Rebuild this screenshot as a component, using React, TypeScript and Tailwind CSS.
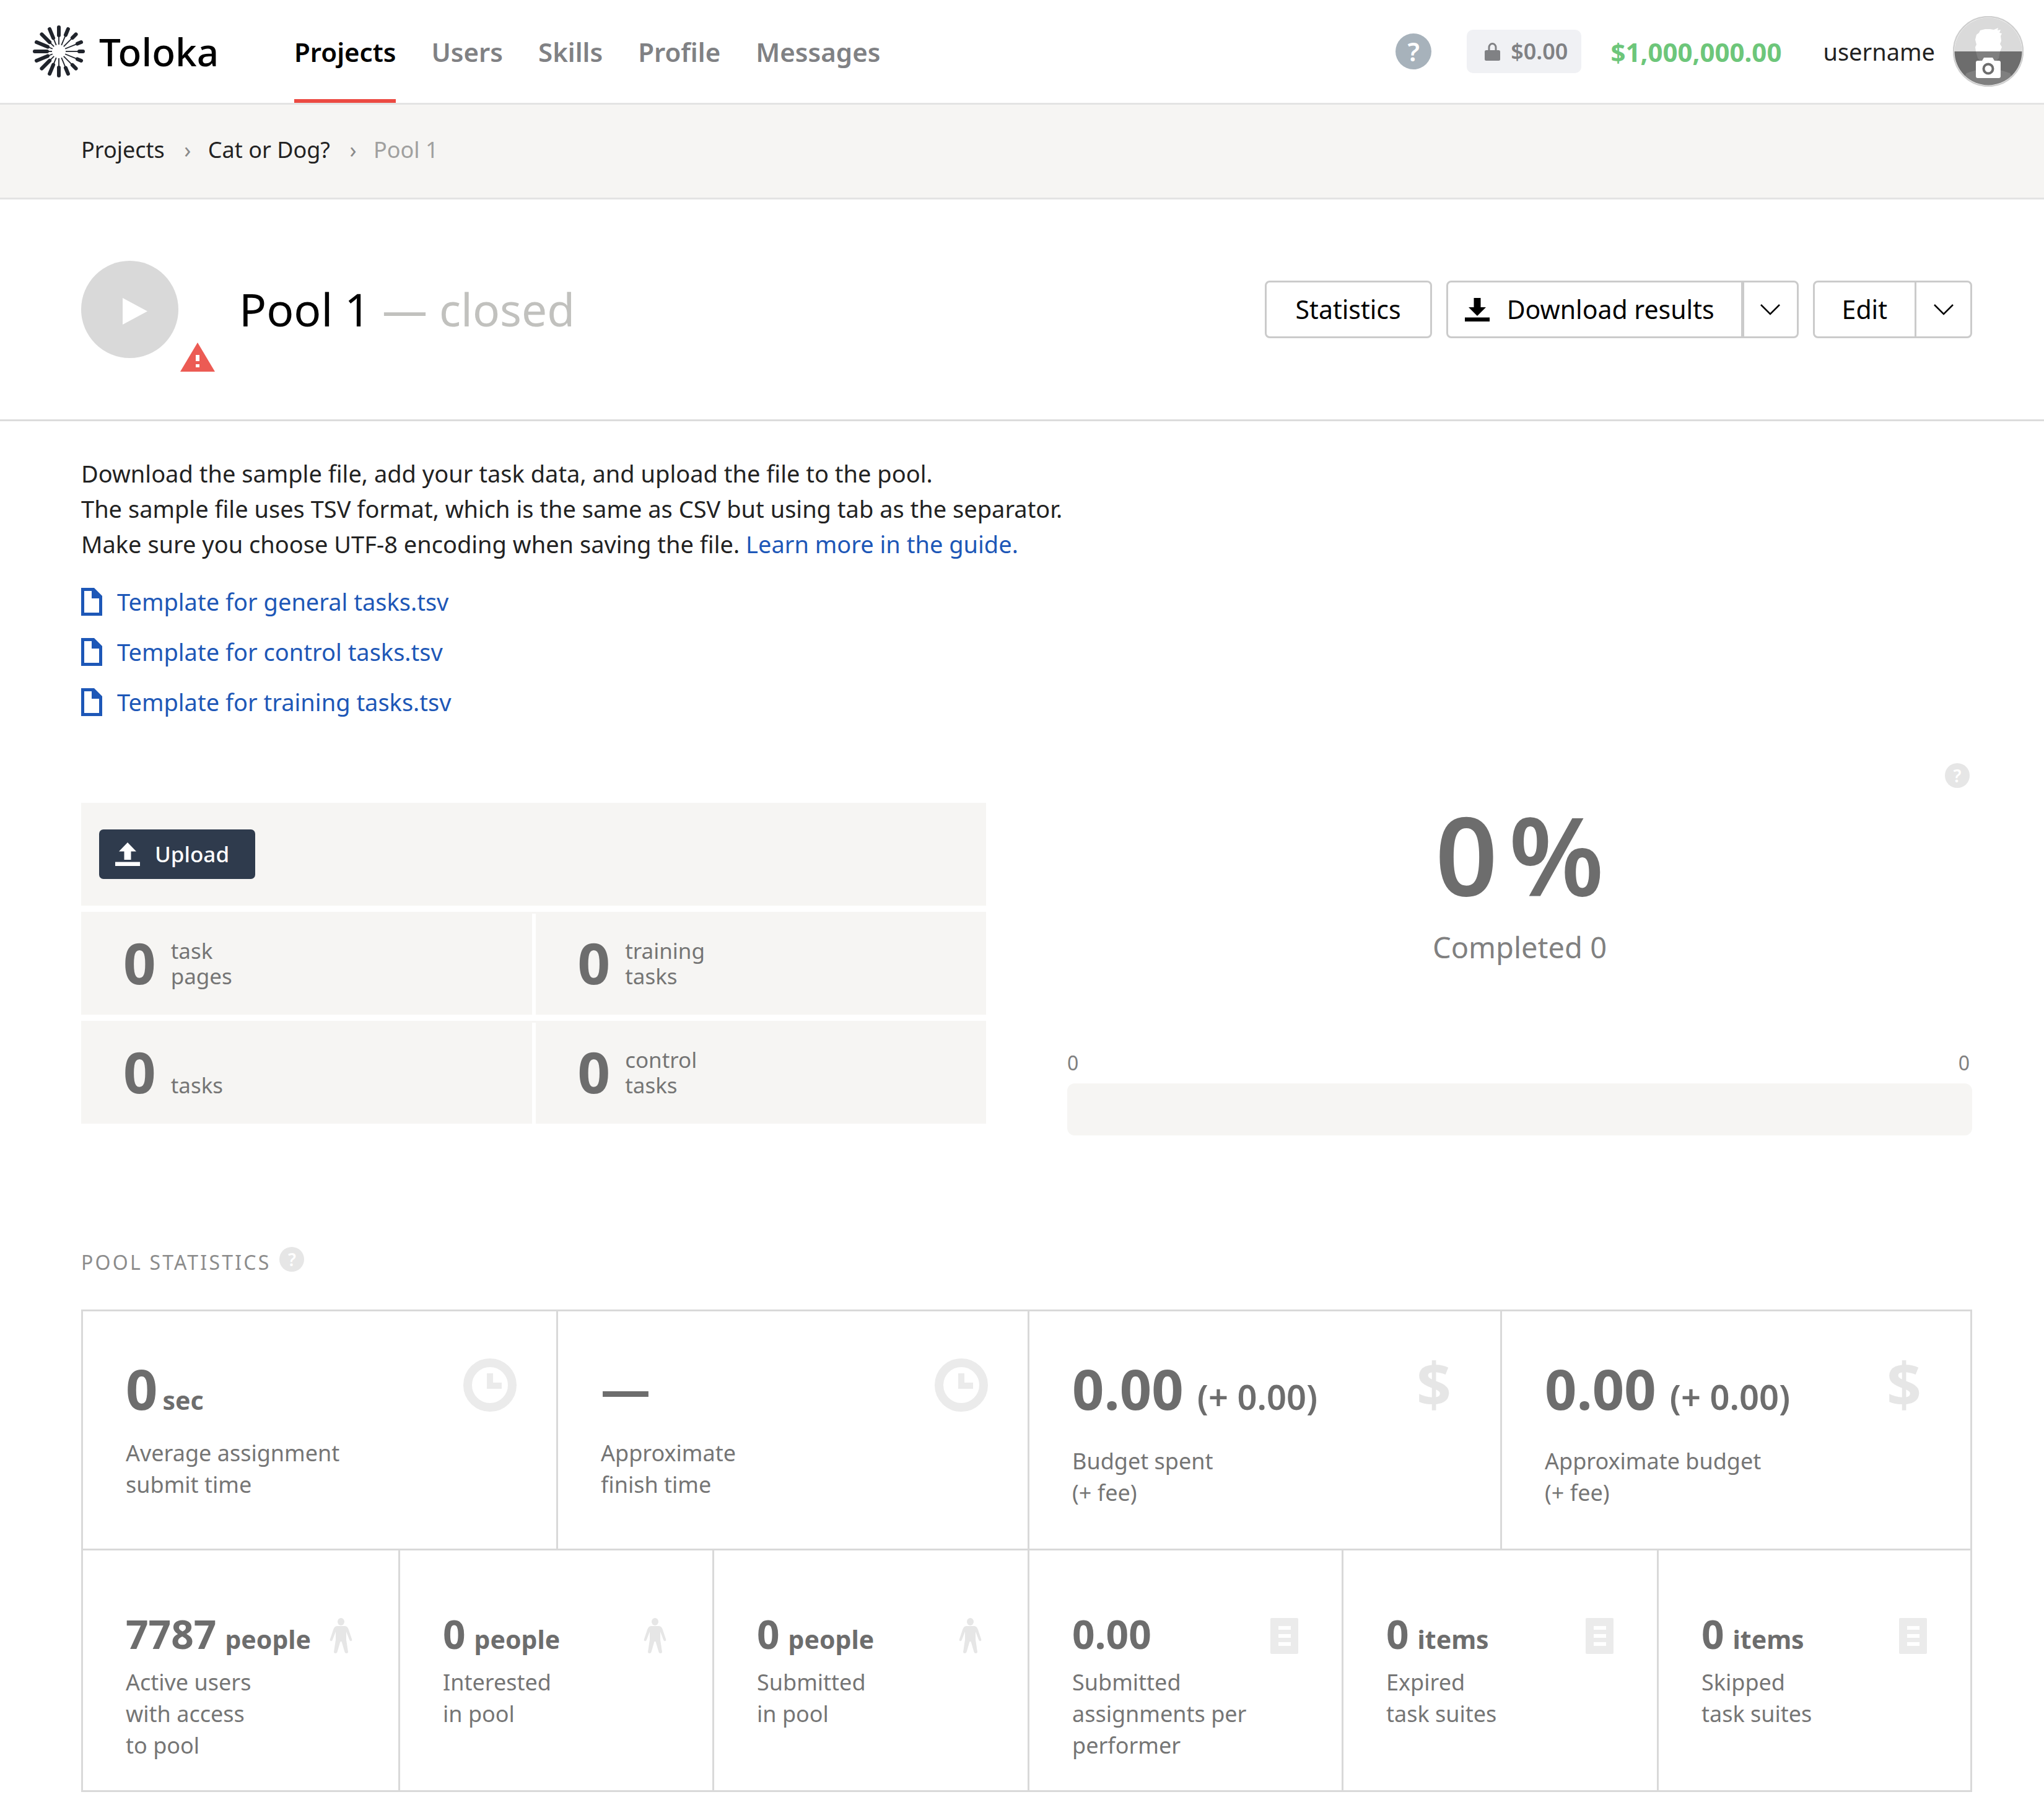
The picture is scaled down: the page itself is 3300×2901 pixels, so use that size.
import type { ReactNode } from 'react';

const RAYS = Array.from({ length: 16 }, (_, i) => {
  const angle = (i * Math.PI) / 8;
  const thickStart = 26 + 7 * Math.cos(angle);
  const point = (r: number) => [43 + r * Math.cos(angle), 43 + r * Math.sin(angle)];
  return { inner: point(11), mid: point(thickStart), outer: point(39) };
});

function LogoMark() {
  return (
    <svg className="size-[86px]" viewBox="0 0 86 86" stroke="#20242c" aria-hidden="true">
      {RAYS.map(({ inner, mid, outer }, i) => (
        <g key={i}>
          <line x1={inner[0]} y1={inner[1]} x2={mid[0]} y2={mid[1]} strokeWidth="1.800" />
          <line x1={mid[0]} y1={mid[1]} x2={outer[0]} y2={outer[1]} strokeWidth="6" strokeLinecap="round" />
        </g>
      ))}
    </svg>
  );
}

function LockIcon() {
  return (
    <svg className="h-[30px] w-[25px]" viewBox="0 0 25 30" aria-hidden="true">
      <path d="M7 14V8.500a5.500 6 0 0 1 11 0V14" fill="none" stroke="#808184" strokeWidth="3" />
      <rect y="13" width="25" height="17" rx="2.500" fill="#808184" />
    </svg>
  );
}

function Avatar() {
  return (
    <svg className="size-[114px]" viewBox="0 0 114 114" aria-hidden="true">
      <defs>
        <clipPath id="avatar-clip">
          <circle cx="57" cy="57" r="54.500" />
        </clipPath>
      </defs>
      <circle cx="57" cy="57" r="56" fill="#fff" stroke="#cfcfcf" strokeWidth="2.500" />
      <g clipPath="url(#avatar-clip)">
        <rect width="114" height="114" fill="#dadada" />
        <path
          d="M38 30 42 27 44 23 52 21 60 21 66 22 73 19 72 23 77 22 75 27 79 28 77 32 78 40 76 45 79 50 76 57 74 68 66 76V84L92 92 104 114H10L22 92 48 84V76L40 68 37 57 36 50 38 46 36 38Z"
          fill="#fff"
        />
        <rect y="57" width="114" height="57" fill="#000" fillOpacity=".5" />
      </g>
      <path d="M40 72h7l3-5h14l3 5h7q3 0 3 3v22q0 3-3 3H40q-3 0-3-3V75q0-3 3-3Z" fill="#fff" />
      <circle cx="57" cy="85" r="7.500" fill="none" stroke="#6d6d6d" strokeWidth="4" />
    </svg>
  );
}

function WarningIcon() {
  return (
    <svg className="h-[47px] w-[56px]" viewBox="0 0 56 47" role="img" aria-label="Warning">
      <path d="M28 0 56 47H0Z" fill="#ec5b54" />
      <path d="M25 20h6v10h-6zM25 35h6v5h-6z" fill="#fff" />
    </svg>
  );
}

function DownloadIcon() {
  return (
    <svg className="h-[38px] w-[40px]" viewBox="0 0 40 38" aria-hidden="true">
      <path d="M14.500 0h11v15H34L20 29 6 15h8.500zM0 31.500h40V38H0z" />
    </svg>
  );
}

function UploadIcon() {
  return (
    <svg className="h-[38px] w-[40px]" viewBox="0 0 40 38" fill="currentColor" aria-hidden="true">
      <path d="M20 0 34 14.500h-8.500V28h-11V14.500H6zM0 31.500h40V38H0z" />
    </svg>
  );
}

function ChevronIcon() {
  return (
    <svg className="h-[18px] w-[32px]" viewBox="0 0 32 18" fill="none" stroke="#000" strokeWidth="2.500" aria-hidden="true">
      <path d="M1 1 16 16 31 1" />
    </svg>
  );
}

function FileIcon() {
  return (
    <svg className="h-[45px] w-[34px]" viewBox="0 0 34 45" fill="#1d57b7" fillRule="evenodd" aria-hidden="true">
      <path d="M0 0H21L34 13V45H0ZM5 5V40H29V17H17V5Z" />
    </svg>
  );
}

function ClockIcon() {
  return (
    <svg className="size-[86px]" viewBox="0 0 86 86" aria-hidden="true">
      <circle cx="43" cy="43" r="36" fill="none" stroke="#ebebeb" strokeWidth="14" />
      <path d="M38 24h10v15h14v10H38z" fill="#ebebeb" />
    </svg>
  );
}

function DollarIcon() {
  return (
    <span className="flex h-[86px] w-[86px] items-center justify-center pb-[6px] text-[98px] leading-none font-bold text-[#e6e6e6]" aria-hidden="true">
      $
    </span>
  );
}

function PersonIcon() {
  return (
    <svg className="h-[58px] w-[45px]" viewBox="0 0 45 58" fill="#e6e6e6" aria-hidden="true">
      <ellipse cx="22.500" cy="6" rx="5.500" ry="6" />
      <path d="M16 13h13q4 0 6 6l5 15q1 3-1 3-2 1-3-2l-5-13v13l3 20q0 2-2.500 2T28.500 55L23.500 38h-2L16.500 55q-.5 2-3 2T11 55l3-20V22L9 35q-1 3-3 2-2 0-1-3l5-15q2-6 6-6Z" />
    </svg>
  );
}

function SheetIcon() {
  return (
    <svg className="h-[58px] w-[45px]" viewBox="0 0 45 58" aria-hidden="true">
      <rect width="45" height="58" rx="2" fill="#ebebeb" />
      <path d="M13 13h20v6H13zM13 26h20v6H13zM13 39h20v6H13z" fill="#fff" />
    </svg>
  );
}

function HintButton({ className = '' }: { className?: string }) {
  return (
    <button
      type="button"
      aria-label="Help"
      className={`flex size-10 items-center justify-center rounded-full bg-[#e6e6e6] text-[28px] leading-none font-semibold text-white ${className}`}
    >
      ?
    </button>
  );
}

const NAV = ['Projects', 'Users', 'Skills', 'Profile', 'Messages'];
const TEMPLATES = ['Template for general tasks.tsv', 'Template for control tasks.tsv', 'Template for training tasks.tsv'];

function Header() {
  return (
    <header className="flex h-[169px] items-center border-b-[3px] border-[#e3e3e3] pr-[33px] pl-[52px]">
      <a href="#" className="flex w-[423px] shrink-0 items-center gap-[22px] text-[62px] leading-none font-medium text-black">
        <LogoMark />
        Toloka
      </a>
      <nav className="flex h-full gap-[57px] text-[42px] font-semibold text-[#808184]">
        {NAV.map((item, i) => (
          <a key={item} href="#" className={i === 0 ? 'relative flex items-center text-black' : 'flex items-center'}>
            {item}
            {i === 0 && <span className="absolute inset-x-0 bottom-0 h-[6px] bg-[#ec4a42]" />}
          </a>
        ))}
      </nav>
      <div className="ml-auto flex items-center">
        <button
          type="button"
          aria-label="Help"
          className="flex size-[58px] items-center justify-center rounded-full bg-[#a7b2bb] text-[42px] leading-none font-semibold text-white"
        >
          ?
        </button>
        <span className="ml-[57px] flex h-[70px] items-center gap-[17px] rounded-[10px] bg-[#f0f1f4] pr-[22px] pl-[29px] text-[36px] font-semibold text-[#808184]">
          <LockIcon />
          $0.00
        </span>
        <span className="ml-[47px] text-[42px] font-bold text-[#6dc67a]">$1,000,000.00</span>
        <a href="#" className="ml-[67px] flex items-center gap-[29px] text-[38px] text-[#222]">
          username
          <Avatar />
        </a>
      </div>
    </header>
  );
}

function Breadcrumbs() {
  return (
    <nav aria-label="Breadcrumb" className="flex h-[153px] items-center border-b-[3px] border-[#e3e3e3] bg-[#f6f5f3] px-[131px] pb-1 text-[36px] text-[#222]">
      <a href="#">Projects</a>
      <span className="w-[70px] pl-1 text-center text-[#8a8a8a]">›</span>
      <a href="#">Cat or Dog?</a>
      <span className="w-[70px] pl-1 text-center text-[#8a8a8a]">›</span>
      <span className="text-[#a0a09f]">Pool 1</span>
    </nav>
  );
}

function SplitButton({ children, divider }: { children: ReactNode; divider: string }) {
  return (
    <div className="flex h-[93px] rounded-[8px] border-[3px] border-[#cbcbcb]">
      {children}
      <button type="button" aria-label="More options" className={`flex w-[90px] items-center justify-center border-[#cbcbcb] ${divider}`}>
        <ChevronIcon />
      </button>
    </div>
  );
}

function TitleBar() {
  return (
    <section className="flex h-[358px] items-center border-b-[3px] border-[#dcdcdc] pr-[116px] pl-[131px]">
      <div className="relative">
        <button type="button" aria-label="Start pool" className="flex size-[157px] items-center justify-center rounded-full bg-[#d9d9d9] pt-[5px] pl-[16px]">
          <svg className="h-[43px] w-[40px]" viewBox="0 0 40 43" fill="#fff" aria-hidden="true">
            <path d="M0 0 40 21.500 0 43Z" />
          </svg>
        </button>
        <span className="absolute -right-[59px] -bottom-[22px]">
          <WarningIcon />
        </span>
      </div>
      <h1 className="ml-[98px] pb-0.5 text-[73px] leading-none text-black">
        Pool 1 <span className="text-[#c1c1be]">— closed</span>
      </h1>
      <div className="ml-auto flex gap-[23px] text-[41px] text-black">
        <button type="button" className="h-[93px] rounded-[8px] border-[3px] border-[#cbcbcb] px-[47px]">
          Statistics
        </button>
        <SplitButton divider="border-l-[5px]">
          <button type="button" className="flex items-center gap-[28px] pr-[43px] pl-[27px]">
            <DownloadIcon />
            Download results
          </button>
        </SplitButton>
        <SplitButton divider="border-l-[3px]">
          <button type="button" className="px-[44px]">
            Edit
          </button>
        </SplitButton>
      </div>
    </section>
  );
}

function CountCell({ lines }: { lines: string[] }) {
  return (
    <div className="flex flex-1 items-center gap-[24px] pl-[68px]">
      <span className="pb-0.5 text-[92px] leading-none font-bold">0</span>
      <span className="flex h-[82px] flex-col justify-end text-[35px] leading-[41px] text-[#757575]">
        {lines.map((line) => (
          <span key={line}>{line}</span>
        ))}
      </span>
    </div>
  );
}

function CountRow({ left, right }: { left: string[]; right: string[] }) {
  return (
    <div className="flex h-[166px] bg-[#f6f5f3]">
      <CountCell lines={left} />
      <div className="mt-[3px] w-[6px] bg-white" />
      <CountCell lines={right} />
    </div>
  );
}

function Progress() {
  return (
    <div className="flex flex-col">
      <HintButton className="mr-1 self-end" />
      <p className="mt-[11px] flex justify-center gap-[18px] text-[176px] leading-[190px] font-semibold text-[#6d6d6d]">
        <span>0</span>
        <span>%</span>
      </p>
      <p className="mt-[26px] text-center text-[47px] leading-[60px] text-[#808080]">Completed 0</p>
      <div className="mt-[137px] flex justify-between pr-1 text-[32px] leading-[40px] text-[#808080]">
        <span>0</span>
        <span>0</span>
      </div>
      <div role="progressbar" aria-label="Pool progress" aria-valuenow={0} className="mt-[13px] h-[84px] rounded-[12px] bg-[#f6f5f3]" />
    </div>
  );
}

type Stat = { value: string; unit?: string; label: string[]; icon: ReactNode };

const MAIN_STATS: Stat[] = [
  { value: '0', unit: 'sec', label: ['Average assignment', 'submit time'], icon: <ClockIcon /> },
  { value: '—', label: ['Approximate', 'finish time'], icon: <ClockIcon /> },
  { value: '0.00', unit: '(+ 0.00)', label: ['Budget spent', '(+ fee)'], icon: <DollarIcon /> },
  { value: '0.00', unit: '(+ 0.00)', label: ['Approximate budget', '(+ fee)'], icon: <DollarIcon /> },
];

const DETAIL_STATS: Stat[] = [
  { value: '7787', unit: 'people', label: ['Active users', 'with access', 'to pool'], icon: <PersonIcon /> },
  { value: '0', unit: 'people', label: ['Interested', 'in pool'], icon: <PersonIcon /> },
  { value: '0', unit: 'people', label: ['Submitted', 'in pool'], icon: <PersonIcon /> },
  { value: '0.00', label: ['Submitted', 'assignments per', 'performer'], icon: <SheetIcon /> },
  { value: '0', unit: 'items', label: ['Expired', 'task suites'], icon: <SheetIcon /> },
  { value: '0', unit: 'items', label: ['Skipped', 'task suites'], icon: <SheetIcon /> },
];

function StatLabel({ lines, className }: { lines: string[]; className: string }) {
  return (
    <dt className={`text-[36px] leading-[51px] whitespace-nowrap text-[#757575] ${className}`}>
      {lines.map((line) => (
        <span key={line} className="block">
          {line}
        </span>
      ))}
    </dt>
  );
}

function MainStat({ stat }: { stat: Stat }) {
  const money = stat.unit === '(+ 0.00)';
  return (
    <div className="flex justify-between border-r-[3px] border-b-[3px] border-[#d9d9d9] pt-[69px] pr-[64px] pb-[65px] pl-[69px]">
      <dl className="flex flex-col-reverse justify-end">
        <StatLabel lines={stat.label} className={money ? 'mt-[37px]' : 'mt-[24px]'} />
        <dd className={`flex h-[110px] items-baseline leading-[110px] font-bold whitespace-nowrap ${money ? 'gap-[22px]' : 'gap-[8px]'}`}>
          {stat.value === '—' ? <span className="text-[80px] leading-[110px]">—</span> : <span className="text-[90px]">{stat.value}</span>}
          {stat.unit && <span className={money ? 'text-[56px] font-semibold' : 'text-[41px]'}>{stat.unit}</span>}
        </dd>
      </dl>
      <div className="mt-[7px]">{stat.icon}</div>
    </div>
  );
}

function DetailStat({ stat }: { stat: Stat }) {
  return (
    <div className="flex justify-between border-r-[3px] border-b-[3px] border-[#d9d9d9] pt-[95px] pr-[70px] pb-[47px] pl-[69px]">
      <dl className="flex flex-col-reverse justify-end">
        <StatLabel lines={stat.label} className="mt-[12px]" />
        <dd className="flex h-[80px] items-baseline gap-[14px] leading-[80px] font-bold whitespace-nowrap">
          <span className="text-[64px]">{stat.value}</span>
          {stat.unit && <span className="text-[41px]">{stat.unit}</span>}
        </dd>
      </dl>
      <div className="mt-[14px]">{stat.icon}</div>
    </div>
  );
}

export default function App() {
  return (
    <div className="min-h-screen bg-white font-['Noto_Sans',sans-serif] text-[#222]">
      <Header />
      <Breadcrumbs />
      <TitleBar />
      <main className="pt-[56px] pr-[116px] pl-[131px]">
        <p className="text-[38px] leading-[57px]">
          Download the sample file, add your task data, and upload the file to the pool.
          <br />
          The sample file uses TSV format, which is the same as CSV but using tab as the separator.
          <br />
          Make sure you choose UTF-8 encoding when saving the file.{' '}
          <a href="#" className="text-[#1d57b7]">
            Learn more in the guide.
          </a>
        </p>
        <ul className="mt-[41px] flex flex-col gap-[35px] text-[38px] leading-[46px] text-[#1d57b7]">
          {TEMPLATES.map((name) => (
            <li key={name}>
              <a href="#" className="inline-flex h-[46px] items-center gap-[24px] align-top">
                <FileIcon />
                {name}
              </a>
            </li>
          ))}
        </ul>

        <section className="mt-[76px] grid grid-cols-2 gap-[131px]">
          <div className="flex flex-col gap-[10px] pt-[64px] text-[#6d6d6d]">
            <div className="flex h-[166px] items-center bg-[#f6f5f3] pl-[29px]">
              <button type="button" className="flex h-[80px] items-center gap-[24px] rounded-[7px] bg-[#2f3b4d] pr-[42px] pl-[26px] text-[35px] font-medium text-white">
                <UploadIcon />
                Upload
              </button>
            </div>
            <CountRow left={['task', 'pages']} right={['training', 'tasks']} />
            <CountRow left={['tasks']} right={['control', 'tasks']} />
          </div>
          <Progress />
        </section>

        <section className="mt-[180px] text-[#6d6d6d]">
          <div className="flex items-start gap-[14px]">
            <h2 className="text-[32px] leading-[50px] tracking-widest text-[#8c8c8c]">POOL STATISTICS</h2>
            <HintButton />
          </div>
          <div className="mt-[51px] border-t-[3px] border-l-[3px] border-[#d9d9d9]">
            <div className="grid grid-cols-[767fr_761fr_763fr_759fr]">
              {MAIN_STATS.map((stat) => (
                <MainStat key={stat.label[0]} stat={stat} />
              ))}
            </div>
            <div className="grid grid-cols-[512fr_507fr_509fr_507fr_509fr_506fr]">
              {DETAIL_STATS.map((stat) => (
                <DetailStat key={stat.label.join(' ')} stat={stat} />
              ))}
            </div>
          </div>
        </section>
      </main>
    </div>
  );
}
